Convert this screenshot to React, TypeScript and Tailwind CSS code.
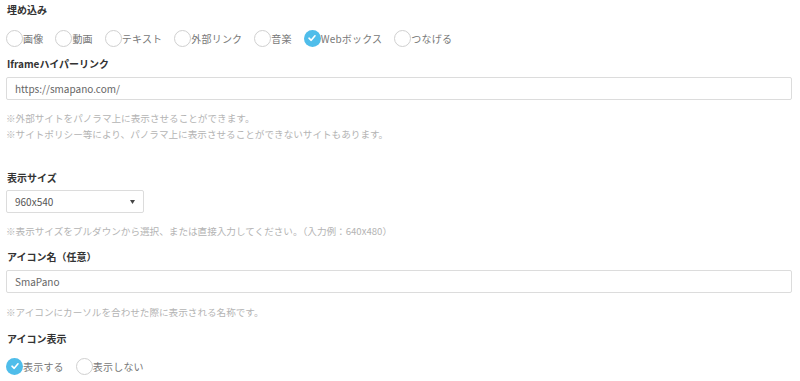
import React from "react";

const font = {
  fontFamily: '"Noto Sans CJK JP", "Noto Sans", sans-serif',
};

function Radio({ label, checked }: { label: string; checked?: boolean }) {
  return (
    <label className="flex items-center mr-[12px] text-[10px] text-[#777]">
      {checked ? (
        <span className="w-[17px] h-[17px] rounded-full bg-[#4fbdea] flex items-center justify-center">
          <svg width="10" height="10" viewBox="0 0 10 10">
            <path d="M2 5.2 L4.2 7.3 L8 2.8" fill="none" stroke="#fff" strokeWidth="1.6" strokeLinecap="round" strokeLinejoin="round" />
          </svg>
        </span>
      ) : (
        <span className="w-[17px] h-[17px] rounded-full border border-[#d0d0d0] bg-white" />
      )}
      <span className="tracking-[0.2px]">{label}</span>
    </label>
  );
}

function Heading({ children, className }: { children: React.ReactNode; className?: string }) {
  return (
    <div className={`h-[20px] leading-[20px] text-[10px] font-bold text-[#333] ${className ?? ""}`}>
      {children}
    </div>
  );
}

function Note({ children }: { children: React.ReactNode }) {
  return <p className="h-[16px] leading-[16px] text-[9.6px] text-[#b4b4b4]">{children}</p>;
}

export default function App() {
  return (
    <div className="w-[800px] h-[381px] bg-white pl-[7px] pr-[8px] overflow-hidden" style={font}>
      <Heading>埋め込み</Heading>

      <div className="flex h-[20px] items-center mt-[8px] -ml-[1px]">
        <Radio label="画像" />
        <Radio label="動画" />
        <Radio label="テキスト" />
        <Radio label="外部リンク" />
        <Radio label="音楽" />
        <Radio label="Webボックス" checked />
        <Radio label="つなげる" />
      </div>

      <Heading className="mt-[6px]">Iframeハイパーリンク</Heading>
      <div className="mt-[3px] -ml-[1px] h-[23px] border border-[#dcdcdc] rounded-[2px] flex items-center px-[8px] text-[10px] text-[#666]">
        https://smapano.com/
      </div>
      <div className="mt-[10px] -ml-[1px]">
        <Note>※外部サイトをパノラマ上に表示させることができます。</Note>
        <Note>※サイトポリシー等により、パノラマ上に表示させることができないサイトもあります。</Note>
      </div>

      <Heading className="mt-[26px]">表示サイズ</Heading>
      <div className="mt-[2px] -ml-[1px] w-[138px] h-[23px] border border-[#dcdcdc] rounded-[2px] flex items-center justify-between pl-[8px] pr-[8px] text-[10px] text-[#555]">
        <span>960x540</span>
        <svg width="5" height="4" viewBox="0 0 5 4">
          <path d="M0 0 L5 0 L2.5 4 Z" fill="#444" />
        </svg>
      </div>
      <div className="mt-[10px] -ml-[1px]">
        <Note>※表示サイズをプルダウンから選択、または直接入力してください。（入力例：640x480）</Note>
      </div>

      <Heading className="mt-[8px]">アイコン名（任意）</Heading>
      <div className="mt-[3px] -ml-[1px] h-[23px] border border-[#dcdcdc] rounded-[2px] flex items-center px-[8px] text-[10px] text-[#666]">
        SmaPano
      </div>
      <div className="mt-[11px] -ml-[1px]">
        <Note>※アイコンにカーソルを合わせた際に表示される名称です。</Note>
      </div>

      <Heading className="mt-[9px]">アイコン表示</Heading>
      <div className="flex h-[20px] items-center mt-[7px] -ml-[1px]">
        <Radio label="表示する" checked />
        <Radio label="表示しない" />
      </div>
    </div>
  );
}
